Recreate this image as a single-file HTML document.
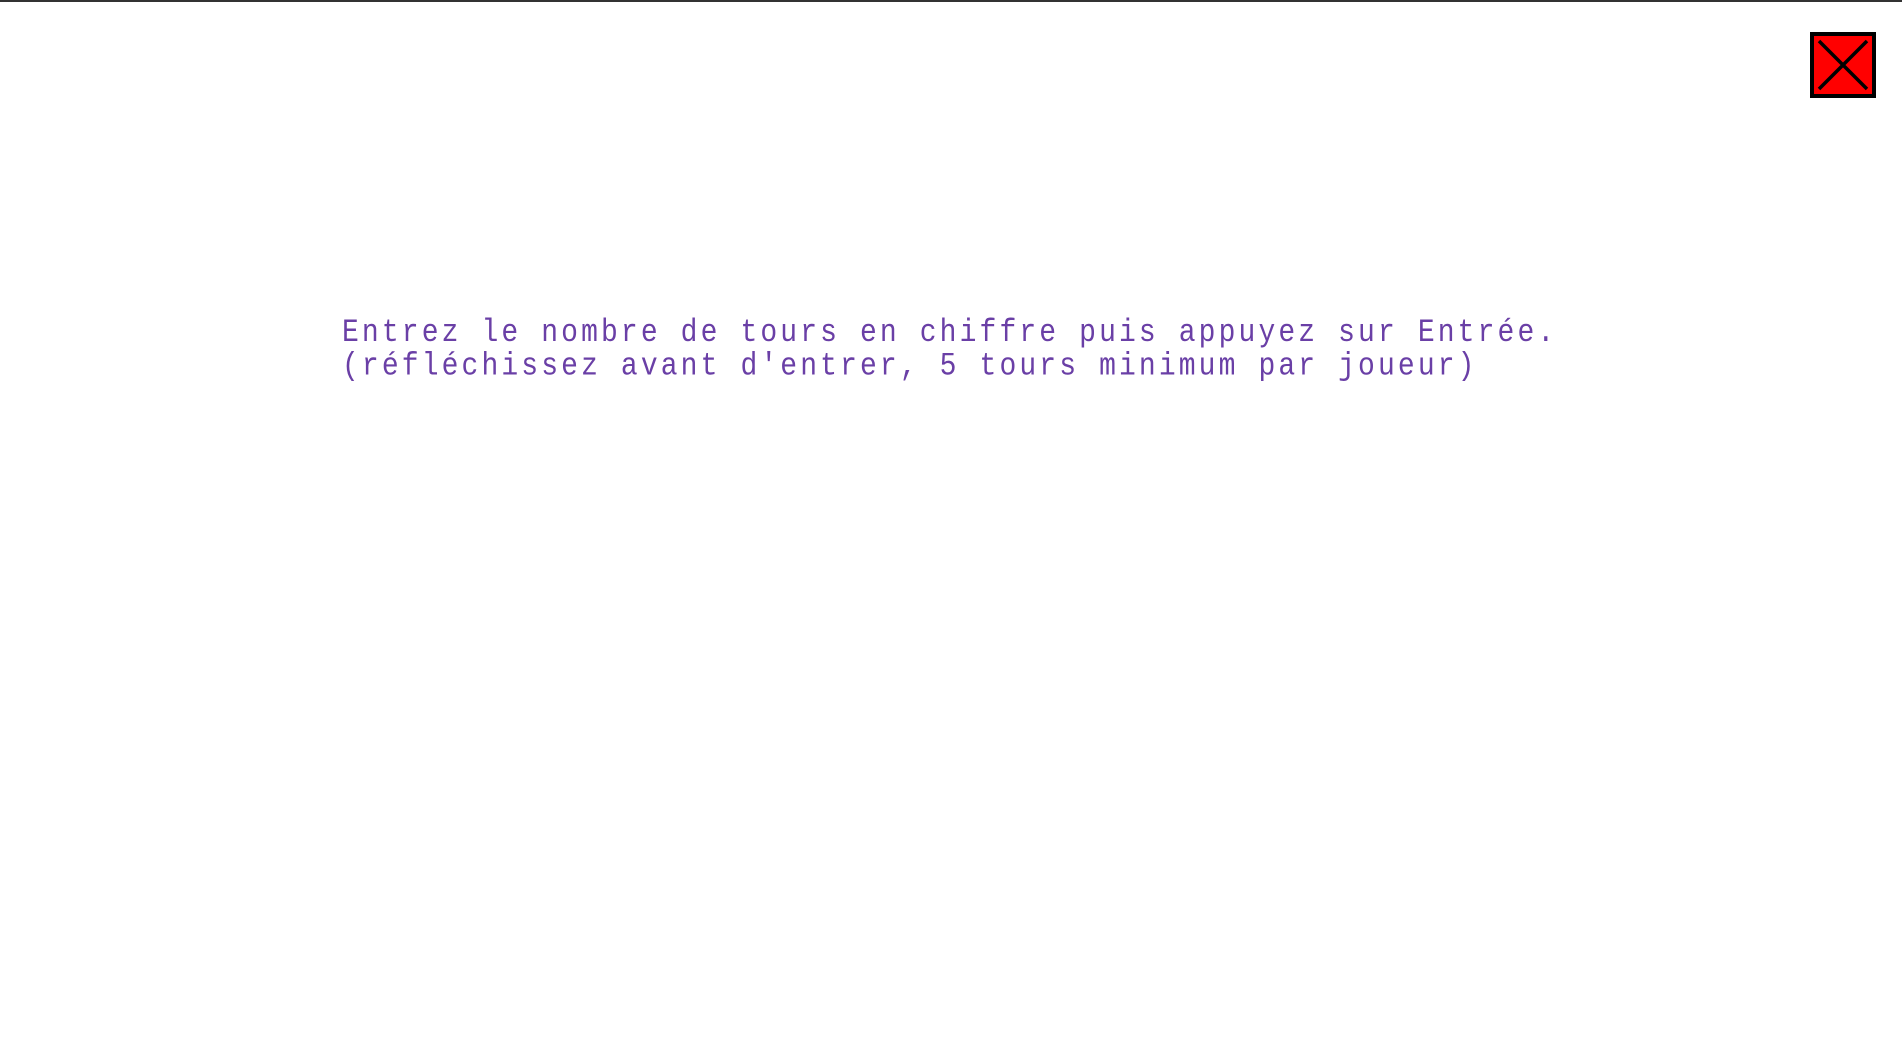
<!DOCTYPE html>
<html><head><meta charset="utf-8"><style>
html,body{margin:0;padding:0;background:#fff;width:1902px;height:1045px;overflow:hidden;position:relative}
.top{position:absolute;left:0;top:0;width:1902px;height:2px;background:#333}
.txt{position:absolute;left:342px;top:318px;font-family:"Liberation Mono",monospace;font-size:28px;line-height:28.6px;letter-spacing:3.12px;color:#6a3fa6;white-space:pre;transform:scaleY(1.15);transform-origin:0 0}
.box{position:absolute;left:1810px;top:32px;width:66px;height:66px;box-sizing:border-box;border:4px solid #000;background:#f00}
</style></head><body>
<div class="top"></div>
<div class="txt">Entrez le nombre de tours en chiffre puis appuyez sur Entrée.
(réfléchissez avant d'entrer, 5 tours minimum par joueur)</div>
<div class="box"><svg width="58" height="58" viewBox="0 0 58 58"><path d="M5 5L53 53M53 5L5 53" stroke="#000" stroke-width="3.5"/></svg></div>
</body></html>
